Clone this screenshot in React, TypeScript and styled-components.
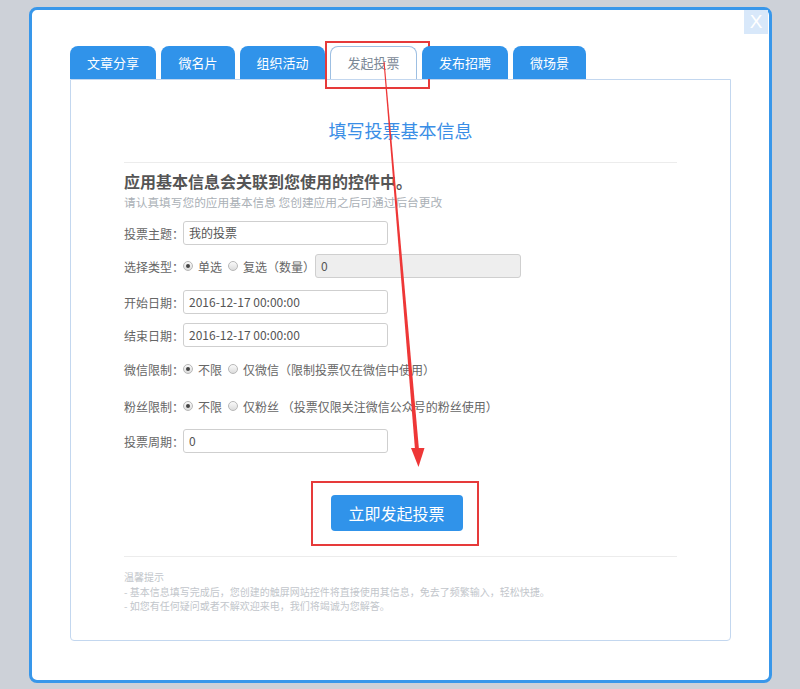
import React from "react";
import styled, { createGlobalStyle } from "styled-components";

const GlobalStyle = createGlobalStyle`
  html, body {
    margin: 0;
    padding: 0;
    background: #cdd1d8;
  }
  body {
    font-family: "Noto Sans CJK SC", "Noto Sans", sans-serif;
  }
`;

const Page = styled.div`
  position: relative;
  width: 800px;
  height: 689px;
  padding: 7px 0 0 29px;
  box-sizing: border-box;
`;

const Modal = styled.div`
  position: relative;
  width: 743px;
  height: 676px;
  box-sizing: border-box;
  border: 3px solid #3897ea;
  border-radius: 8px;
  background: #fff;
  padding: 36px 38px 0 38px;
`;

const CloseButton = styled.div`
  position: absolute;
  top: 0;
  right: 1px;
  width: 24px;
  height: 24px;
  background: #d8e8fa;
  color: #fff;
  font-family: "Liberation Sans", Arial, sans-serif;
  font-size: 19px;
  line-height: 24px;
  text-align: center;
`;

const TabBar = styled.div`
  display: flex;
  gap: 5px;
  height: 33px;
`;

const Tab = styled.div<{ $active?: boolean; $width: number }>`
  position: relative;
  width: ${(p) => p.$width}px;
  height: 33px;
  box-sizing: border-box;
  border-radius: 8px 8px 0 0;
  font-size: 13px;
  text-align: center;
  background: ${(p) => (p.$active ? "#fff" : "#3093ea")};
  color: ${(p) => (p.$active ? "#7b8896" : "#fff")};
  border: ${(p) => (p.$active ? "1px solid #9dbfe2" : "none")};
  border-bottom: none;
  line-height: ${(p) => (p.$active ? "32px" : "33px")};
`;

const Annotation = styled.div<{ $t: number; $r: number; $b: number; $l: number }>`
  position: absolute;
  top: ${(p) => p.$t}px;
  right: ${(p) => p.$r}px;
  bottom: ${(p) => p.$b}px;
  left: ${(p) => p.$l}px;
  border: 2px solid #e63a3a;
  pointer-events: none;
`;

const Panel = styled.div`
  width: 661px;
  height: 562px;
  box-sizing: border-box;
  border: 1px solid #c3d7ef;
  border-radius: 0 0 4px 4px;
  padding: 38px 53px 0 53px;
`;

const PanelTitle = styled.div`
  text-align: center;
  font-size: 18px;
  line-height: 24px;
  color: #3a8ee6;
`;

const Divider = styled.div<{ $top: number }>`
  height: 1px;
  background: #ececec;
  margin-top: ${(p) => p.$top}px;
`;

const InfoTitle = styled.div`
  margin-top: 7px;
  font-size: 16px;
  font-weight: bold;
  line-height: 22px;
  color: #555;
`;

const InfoSub = styled.div`
  margin-top: 2px;
  font-size: 11.7px;
  line-height: 16px;
  color: #aab0b6;
`;

const Form = styled.div`
  margin-top: 11px;
  display: flex;
  flex-direction: column;
`;

const Row = styled.div<{ $top?: number }>`
  display: flex;
  align-items: center;
  height: 24px;
  margin-top: ${(p) => p.$top ?? 0}px;
  font-size: 12px;
  color: #666;
`;

const Label = styled.span`
  width: 59px;
  white-space: nowrap;
`;

const TextInput = styled.div<{ $width?: number; $disabled?: boolean }>`
  width: ${(p) => p.$width ?? 205}px;
  height: 24px;
  box-sizing: border-box;
  border: 1px solid #cfcfcf;
  border-radius: 3px;
  background: ${(p) => (p.$disabled ? "#eeeeee" : "#fff")};
  padding-left: 5px;
  font-size: 12px;
  line-height: 22px;
  color: #555;
`;

const Radio = styled.span<{ $checked?: boolean }>`
  position: relative;
  display: inline-block;
  width: 10px;
  height: 10px;
  box-sizing: border-box;
  border-radius: 50%;
  border: 1px solid #b8b8b8;
  background: linear-gradient(#fafafa, #dcdcdc);
  margin-right: 5px;
  &::after {
    content: "";
    display: ${(p) => (p.$checked ? "block" : "none")};
    position: absolute;
    top: 2px;
    left: 2px;
    width: 4px;
    height: 4px;
    border-radius: 50%;
    background: #444;
  }
`;

const Option = styled.span<{ $gap?: number }>`
  display: inline-flex;
  align-items: center;
  margin-right: ${(p) => p.$gap ?? 6}px;
  white-space: nowrap;
`;

const ButtonWrap = styled.div`
  display: flex;
  justify-content: center;
  margin-top: 42px;
  padding-right: 8px;
`;

const SubmitButton = styled.div`
  position: relative;
  width: 132px;
  height: 36px;
  border-radius: 4px;
  background: #3093ea;
  color: #fff;
  font-size: 16px;
  line-height: 36px;
  text-align: center;
`;

const Tips = styled.div`
  margin-top: 13px;
  font-size: 10px;
  line-height: 14.5px;
  color: #c2c6cb;
`;

const ArrowLayer = styled.svg`
  position: absolute;
  top: 0;
  left: 0;
  pointer-events: none;
`;

const tabs = [
  { name: "文章分享", w: 86 },
  { name: "微名片", w: 74 },
  { name: "组织活动", w: 85 },
  { name: "发起投票", w: 87, active: true },
  { name: "发布招聘", w: 86 },
  { name: "微场景", w: 73 },
];

export default function App() {
  return (
    <>
      <GlobalStyle />
      <Page>
        <Modal>
          <CloseButton>X</CloseButton>
          <TabBar>
            {tabs.map((t) => (
              <Tab key={t.name} $active={t.active} $width={t.w}>
                {t.name}
                {t.active && <Annotation $t={-6} $r={-14} $b={-10} $l={-6} />}
              </Tab>
            ))}
          </TabBar>
          <Panel>
            <PanelTitle>填写投票基本信息</PanelTitle>
            <Divider $top={20} />
            <InfoTitle>应用基本信息会关联到您使用的控件中。</InfoTitle>
            <InfoSub>请认真填写您的应用基本信息 您创建应用之后可通过后台更改</InfoSub>
            <Form>
              <Row>
                <Label>投票主题：</Label>
                <TextInput>我的投票</TextInput>
              </Row>
              <Row $top={9}>
                <Label>选择类型：</Label>
                <Option>
                  <Radio $checked />
                  单选
                </Option>
                <Option $gap={0}>
                  <Radio />
                  复选（数量）
                </Option>
                <TextInput $width={206} $disabled>
                  0
                </TextInput>
              </Row>
              <Row $top={12}>
                <Label>开始日期：</Label>
                <TextInput>2016-12-17 00:00:00</TextInput>
              </Row>
              <Row $top={9}>
                <Label>结束日期：</Label>
                <TextInput>2016-12-17 00:00:00</TextInput>
              </Row>
              <Row $top={10}>
                <Label>微信限制：</Label>
                <Option>
                  <Radio $checked />
                  不限
                </Option>
                <Option>
                  <Radio />
                  仅微信（限制投票仅在微信中使用）
                </Option>
              </Row>
              <Row $top={13}>
                <Label>粉丝限制：</Label>
                <Option>
                  <Radio $checked />
                  不限
                </Option>
                <Option>
                  <Radio />
                  仅粉丝 （投票仅限关注微信公众号的粉丝使用）
                </Option>
              </Row>
              <Row $top={11}>
                <Label>投票周期：</Label>
                <TextInput>0</TextInput>
              </Row>
            </Form>
            <ButtonWrap>
              <SubmitButton>
                立即发起投票
                <Annotation $t={-14} $r={-16} $b={-15} $l={-20} />
              </SubmitButton>
            </ButtonWrap>
            <Divider $top={25} />
            <Tips>
              温馨提示
              <br />- 基本信息填写完成后，您创建的触屏网站控件将直接使用其信息，免去了频繁输入，轻松快捷。
              <br />- 如您有任何疑问或者不解欢迎来电，我们将竭诚为您解答。
            </Tips>
          </Panel>
        </Modal>
        <ArrowLayer width="800" height="689" viewBox="0 0 800 689">
          <polygon points="383.5,62 384.6,62 419.2,452 415.2,452" fill="#ee3737" />
          <polygon points="411,448 424.5,448 418.5,467" fill="#ee3737" />
        </ArrowLayer>
      </Page>
    </>
  );
}
